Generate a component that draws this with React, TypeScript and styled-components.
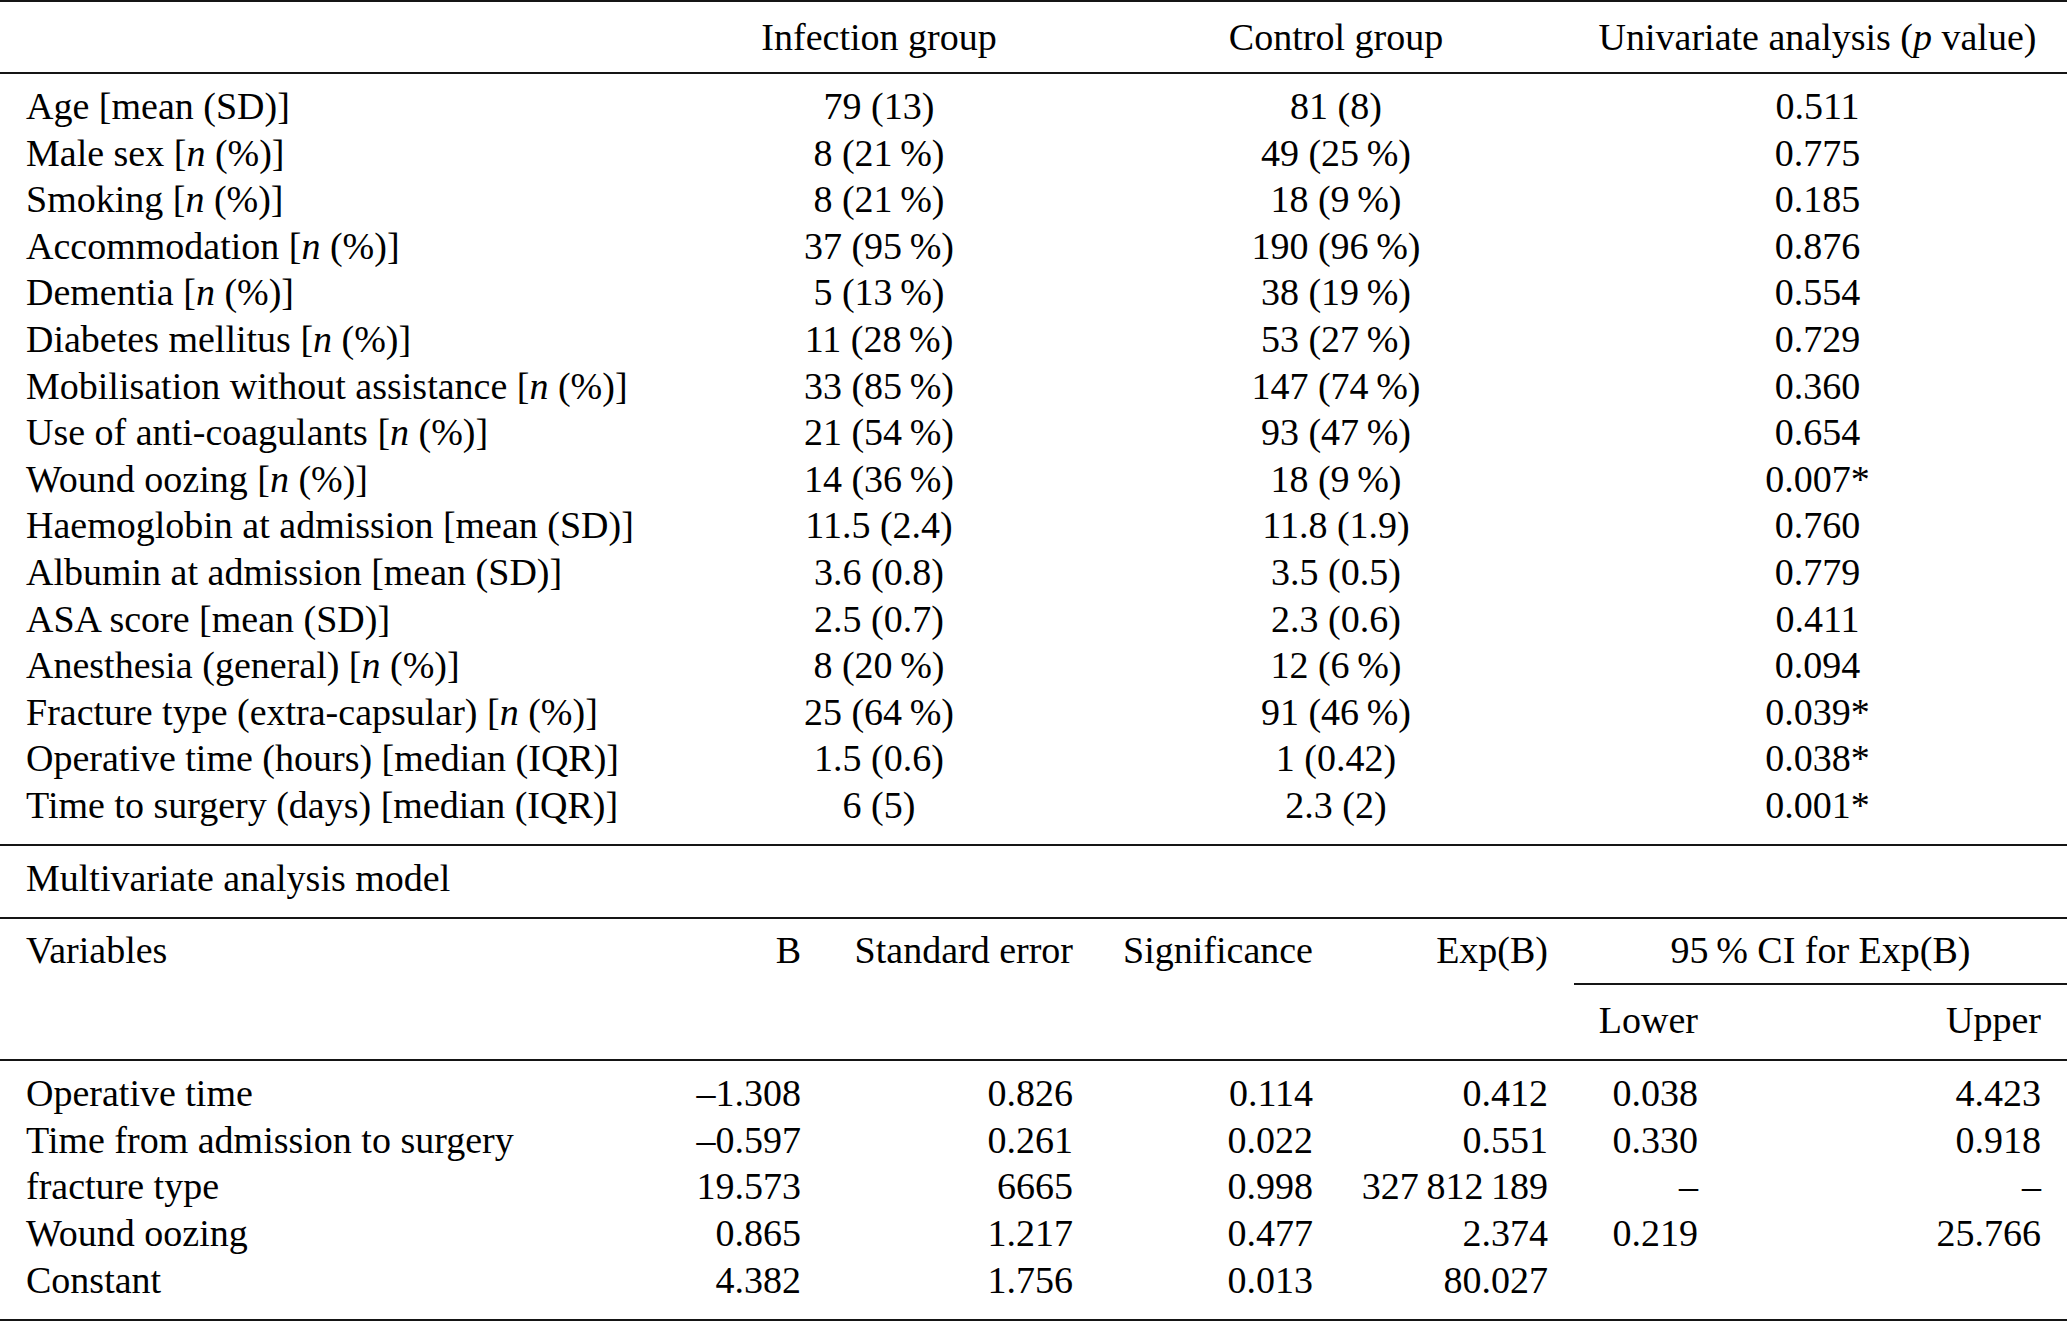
import React from 'react';
import styled, { createGlobalStyle } from 'styled-components';

const GlobalStyle = createGlobalStyle`
  html, body {
    margin: 0;
    padding: 0;
    background: #ffffff;
  }
  body {
    font-family: "Liberation Serif", "Times New Roman", serif;
    color: #000;
  }
`;

const LINE = 46.6;
const summaryCols = '654px 398px 516px 447px';
const modelCols = '514px 261px 272px 240px 235px 150px 343px';

type Stat = 'mean' | 'n' | 'median';

const summary: [string, Stat, string, string, string][] = [
  ['Age', 'mean', '79 (13)', '81 (8)', '0.511'],
  ['Male sex', 'n', '8 (21\u2009%)', '49 (25\u2009%)', '0.775'],
  ['Smoking', 'n', '8 (21\u2009%)', '18 (9\u2009%)', '0.185'],
  ['Accommodation', 'n', '37 (95\u2009%)', '190 (96\u2009%)', '0.876'],
  ['Dementia', 'n', '5 (13\u2009%)', '38 (19\u2009%)', '0.554'],
  ['Diabetes mellitus', 'n', '11 (28\u2009%)', '53 (27\u2009%)', '0.729'],
  ['Mobilisation without assistance', 'n', '33 (85\u2009%)', '147 (74\u2009%)', '0.360'],
  ['Use of anti-coagulants', 'n', '21 (54\u2009%)', '93 (47\u2009%)', '0.654'],
  ['Wound oozing', 'n', '14 (36\u2009%)', '18 (9\u2009%)', '0.007*'],
  ['Haemoglobin at admission', 'mean', '11.5 (2.4)', '11.8 (1.9)', '0.760'],
  ['Albumin at admission', 'mean', '3.6 (0.8)', '3.5 (0.5)', '0.779'],
  ['ASA score', 'mean', '2.5 (0.7)', '2.3 (0.6)', '0.411'],
  ['Anesthesia (general)', 'n', '8 (20\u2009%)', '12 (6\u2009%)', '0.094'],
  ['Fracture type (extra-capsular)', 'n', '25 (64\u2009%)', '91 (46\u2009%)', '0.039*'],
  ['Operative time (hours)', 'median', '1.5 (0.6)', '1 (0.42)', '0.038*'],
  ['Time to surgery (days)', 'median', '6 (5)', '2.3 (2)', '0.001*'],
];

const model: string[][] = [
  ['Operative time', '\u20131.308', '0.826', '0.114', '0.412', '0.038', '4.423'],
  ['Time from admission to surgery', '\u20130.597', '0.261', '0.022', '0.551', '0.330', '0.918'],
  ['fracture type', '19.573', '6665', '0.998', '327\u2009812\u2009189', '\u2013', '\u2013'],
  ['Wound oozing', '0.865', '1.217', '0.477', '2.374', '0.219', '25.766'],
  ['Constant', '4.382', '1.756', '0.013', '80.027', '', ''],
];

const Page = styled.div`
  width: 2067px;
  font-size: 38px;
  line-height: ${LINE}px;
`;

const Rule = styled.div`
  height: 2px;
  background: #151515;
`;

const CMidRule = styled.div`
  grid-column: 6 / 8;
  height: 2px;
  background: #151515;
  margin: 9.5px -26px 11.5px 26px;
`;

const Block = styled.div<{ $pt: number; $pb: number }>`
  padding: ${(p) => p.$pt}px 0 ${(p) => p.$pb}px;
`;

const Row = styled.div<{ $cols: string }>`
  display: grid;
  grid-template-columns: ${(p) => p.$cols};
  padding: 0 26px;
  height: ${LINE}px;
`;

const HeadGrid = styled.div`
  display: grid;
  grid-template-columns: ${modelCols};
  grid-template-rows: ${LINE}px auto ${LINE}px;
  padding: 8px 26px 16px;
`;

const Cell = styled.div<{ $align?: 'left' | 'center' | 'right'; $col?: number }>`
  text-align: ${(p) => p.$align ?? 'left'};
  white-space: nowrap;
  ${(p) => (p.$col ? `grid-column: ${p.$col};` : '')}
`;

const SpanHead = styled.div`
  grid-column: 6 / 8;
  text-align: center;
  white-space: nowrap;
  margin: 0 -26px 0 26px;
`;

const Var = styled.i`
  font-style: italic;
`;

const statLabel = (s: Stat) =>
  s === 'n' ? (
    <>
      [<Var>n</Var> (%)]
    </>
  ) : s === 'mean' ? (
    '[mean (SD)]'
  ) : (
    '[median (IQR)]'
  );

export default function App() {
  return (
    <>
      <GlobalStyle />
      <Page>
        <Rule />
        <Block $pt={12} $pb={11.4}>
          <Row $cols={summaryCols}>
            <Cell />
            <Cell $align="center">Infection group</Cell>
            <Cell $align="center">Control group</Cell>
            <Cell $align="center">
              Univariate analysis (<Var>p</Var> value)
            </Cell>
          </Row>
        </Block>
        <Rule />
        <Block $pt={9} $pb={15.7}>
          {summary.map(([label, stat, a, b, p]) => (
            <Row key={label} $cols={summaryCols}>
              <Cell>
                {label} {statLabel(stat)}
              </Cell>
              <Cell $align="center">{a}</Cell>
              <Cell $align="center">{b}</Cell>
              <Cell $align="center">{p}</Cell>
            </Row>
          ))}
        </Block>
        <Rule />
        <Block $pt={9} $pb={15.5}>
          <Row $cols="1fr">
            <Cell>Multivariate analysis model</Cell>
          </Row>
        </Block>
        <Rule />
        <HeadGrid>
          <Cell>Variables</Cell>
          <Cell $align="right">B</Cell>
          <Cell $align="right">Standard error</Cell>
          <Cell $align="right">Significance</Cell>
          <Cell $align="right">Exp(B)</Cell>
          <SpanHead>95&#8201;% CI for Exp(B)</SpanHead>
          <CMidRule />
          <Cell $col={6} $align="right">
            Lower
          </Cell>
          <Cell $align="right">Upper</Cell>
        </HeadGrid>
        <Rule />
        <Block $pt={8.7} $pb={16.3}>
          {model.map((r) => (
            <Row key={r[0]} $cols={modelCols}>
              {r.map((v, i) => (
                <Cell key={i} $align={i === 0 ? 'left' : 'right'}>
                  {v}
                </Cell>
              ))}
            </Row>
          ))}
        </Block>
        <Rule />
      </Page>
    </>
  );
}
